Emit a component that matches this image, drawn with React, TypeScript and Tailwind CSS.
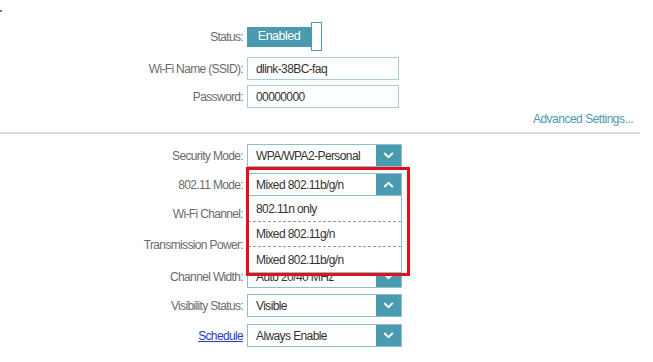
import React from "react";

const Chevron = ({ up = false }: { up?: boolean }) => (
  <svg width="11" height="7" viewBox="0 0 11 7" fill="none">
    {up ? (
      <path d="M1.2 6 L5.5 1.8 L9.8 6" stroke="white" strokeWidth="1.8" />
    ) : (
      <path d="M1.2 1 L5.5 5.2 L9.8 1" stroke="white" strokeWidth="1.8" />
    )}
  </svg>
);

const Label = ({ children }: { children: React.ReactNode }) => (
  <div className="w-[243px] text-right text-[12px] leading-none tracking-[-0.65px] text-[#6b6b6b]">{children}</div>
);

const Select = ({ value, up = false }: { value: string; up?: boolean }) => (
  <div className="ml-[4px] flex h-[23px] w-[155px] border border-[#8fbfcc] bg-white">
    <div className="flex flex-1 items-center pl-[8px] text-[12px] tracking-[-0.6px] text-[#333]">{value}</div>
    <div className="flex w-[25px] items-center justify-center bg-[#4a9ab0]">
      <Chevron up={up} />
    </div>
  </div>
);

const Row = ({ label, className, children }: { label: React.ReactNode; className: string; children: React.ReactNode }) => (
  <div className={"flex items-center " + className}>
    <Label>{label}</Label>
    {children}
  </div>
);

export default function App() {
  return (
    <div className="relative h-[362px] w-[653px] overflow-hidden bg-white font-['Liberation_Sans',Arial,sans-serif]">
      <div className="absolute left-0 top-[10px] h-[2px] w-[2px] bg-[#777]" />
      <div className="flex flex-col pt-[22px]">
        <Row label="Status:" className="h-[29px]">
          <div className="ml-[4px] flex h-[29px] items-center">
            <div className="flex h-[20px] w-[64px] items-center justify-center bg-[#4a9ab0] text-[12.5px] tracking-[-0.5px] text-white">Enabled</div>
            <div className="h-[29px] w-[11px] border border-[#4a9ab0] bg-white" />
          </div>
        </Row>
        <Row label="Wi-Fi Name (SSID):" className="mt-[6px] h-[23px]">
          <div className="ml-[4px] flex h-[23px] w-[152px] items-center border border-[#a8cdd7] pl-[8px] text-[12px] tracking-[-0.6px] text-[#333]">dlink-38BC-faq</div>
        </Row>
        <Row label="Password:" className="mt-[5px] h-[23px]">
          <div className="ml-[4px] flex h-[23px] w-[152px] items-center border border-[#a8cdd7] pl-[8px] text-[12px] tracking-[-0.6px] text-[#333]">00000000</div>
        </Row>
        <div className="mt-[4px] h-[14px] w-[633px] text-right text-[12px] leading-[14px] tracking-[-0.5px] text-[#4a9ab0]">Advanced Settings...</div>
        <div className="mt-[6px] h-[2px] w-[640px] bg-[#dcdcdc]" />
        <Row label="Security Mode:" className="mt-[10px] h-[23px]">
          <Select value="WPA/WPA2-Personal" />
        </Row>
        <Row label="802.11 Mode:" className="mt-[6px] h-[23px]">
          <Select value="Mixed 802.11b/g/n" up />
        </Row>
        <Row label="Wi-Fi Channel:" className="mt-[6px] h-[23px]">
          <Select value="Auto" />
        </Row>
        <Row label="Transmission Power:" className="mt-[8px] h-[23px]">
          <Select value="High" />
        </Row>
        <Row label="Channel Width:" className="mt-[9px] h-[23px]">
          <Select value="Auto 20/40 MHz" />
        </Row>
        <Row label="Visibility Status:" className="mt-[6px] h-[23px]">
          <Select value="Visible" />
        </Row>
        <Row label={<span className="text-[#2b3cc4] underline">Schedule</span>} className="mt-[7px] h-[23px]">
          <Select value="Always Enable" />
        </Row>
      </div>

      <div className="absolute left-[247px] top-[196px] flex h-[77px] w-[155px] flex-col border-x border-b border-[#8fbfcc] bg-white text-[12px] tracking-[-0.6px] text-[#333]">
        <div className="flex h-[26px] items-center border-b border-dashed border-[#999] pl-[8px]">802.11n only</div>
        <div className="flex h-[25px] items-center border-b border-dashed border-[#999] pl-[8px]">Mixed 802.11g/n</div>
        <div className="flex flex-1 items-center pl-[8px]">Mixed 802.11b/g/n</div>
      </div>
      <div className="pointer-events-none absolute left-[246px] top-[167px] h-[109px] w-[164px] border-[3px] border-[#e3101b]" />
    </div>
  );
}
